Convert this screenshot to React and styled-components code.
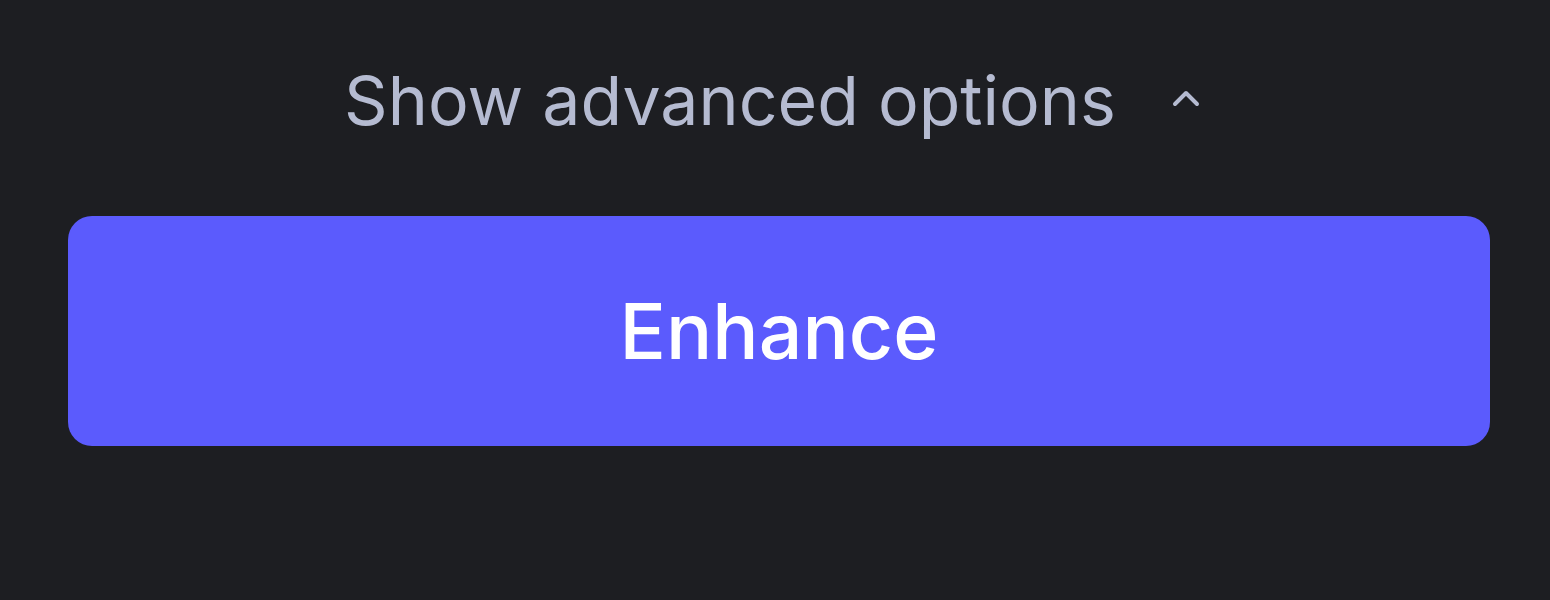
import React, { useState } from "react";
import styled, { createGlobalStyle } from "styled-components";

const GlobalStyle = createGlobalStyle`
  html, body {
    margin: 0;
    padding: 0;
    background: #1d1e22;
  }
  body {
    font-family: "Inter", "Noto Sans", sans-serif;
  }
`;

const Panel = styled.div`
  display: flex;
  flex-direction: column;
  align-items: stretch;
  height: 600px;
  padding: 58px 60px 0 68px;
  box-sizing: border-box;
  background: #1d1e22;
`;

const Toggle = styled.button`
  display: flex;
  align-items: center;
  justify-content: center;
  gap: 56px;
  height: 84px;
  padding: 0;
  margin: 0 14px 74px 0;
  background: none;
  border: none;
  cursor: pointer;
  color: #b5bbd1;
  font-family: "Inter", sans-serif;
  font-size: 68px;
  font-weight: 400;
  svg {
    flex: none;
    margin-top: -4px;
  }
`;

const EnhanceButton = styled.button`
  display: flex;
  align-items: center;
  justify-content: center;
  height: 230px;
  border: none;
  border-radius: 24px;
  background: #5b5bfd;
  color: #ffffff;
  font-family: "Inter", sans-serif;
  font-size: 77px;
  font-weight: 500;
  cursor: pointer;
`;

const Chevron = ({ open }) => (
  <svg width="28" height="19" viewBox="0 0 28 19" fill="none">
    <path
      d={open ? "M3 15 L14 4 L25 15" : "M3 4 L14 15 L25 4"}
      stroke="#b5bbd1"
      strokeWidth="4"
      strokeLinecap="round"
      strokeLinejoin="round"
    />
  </svg>
);

export default function App() {
  const [open, setOpen] = useState(true);
  return (
    <>
      <GlobalStyle />
      <Panel>
        <Toggle onClick={() => setOpen(!open)}>
          Show advanced options
          <Chevron open={open} />
        </Toggle>
        <EnhanceButton>Enhance</EnhanceButton>
      </Panel>
    </>
  );
}
